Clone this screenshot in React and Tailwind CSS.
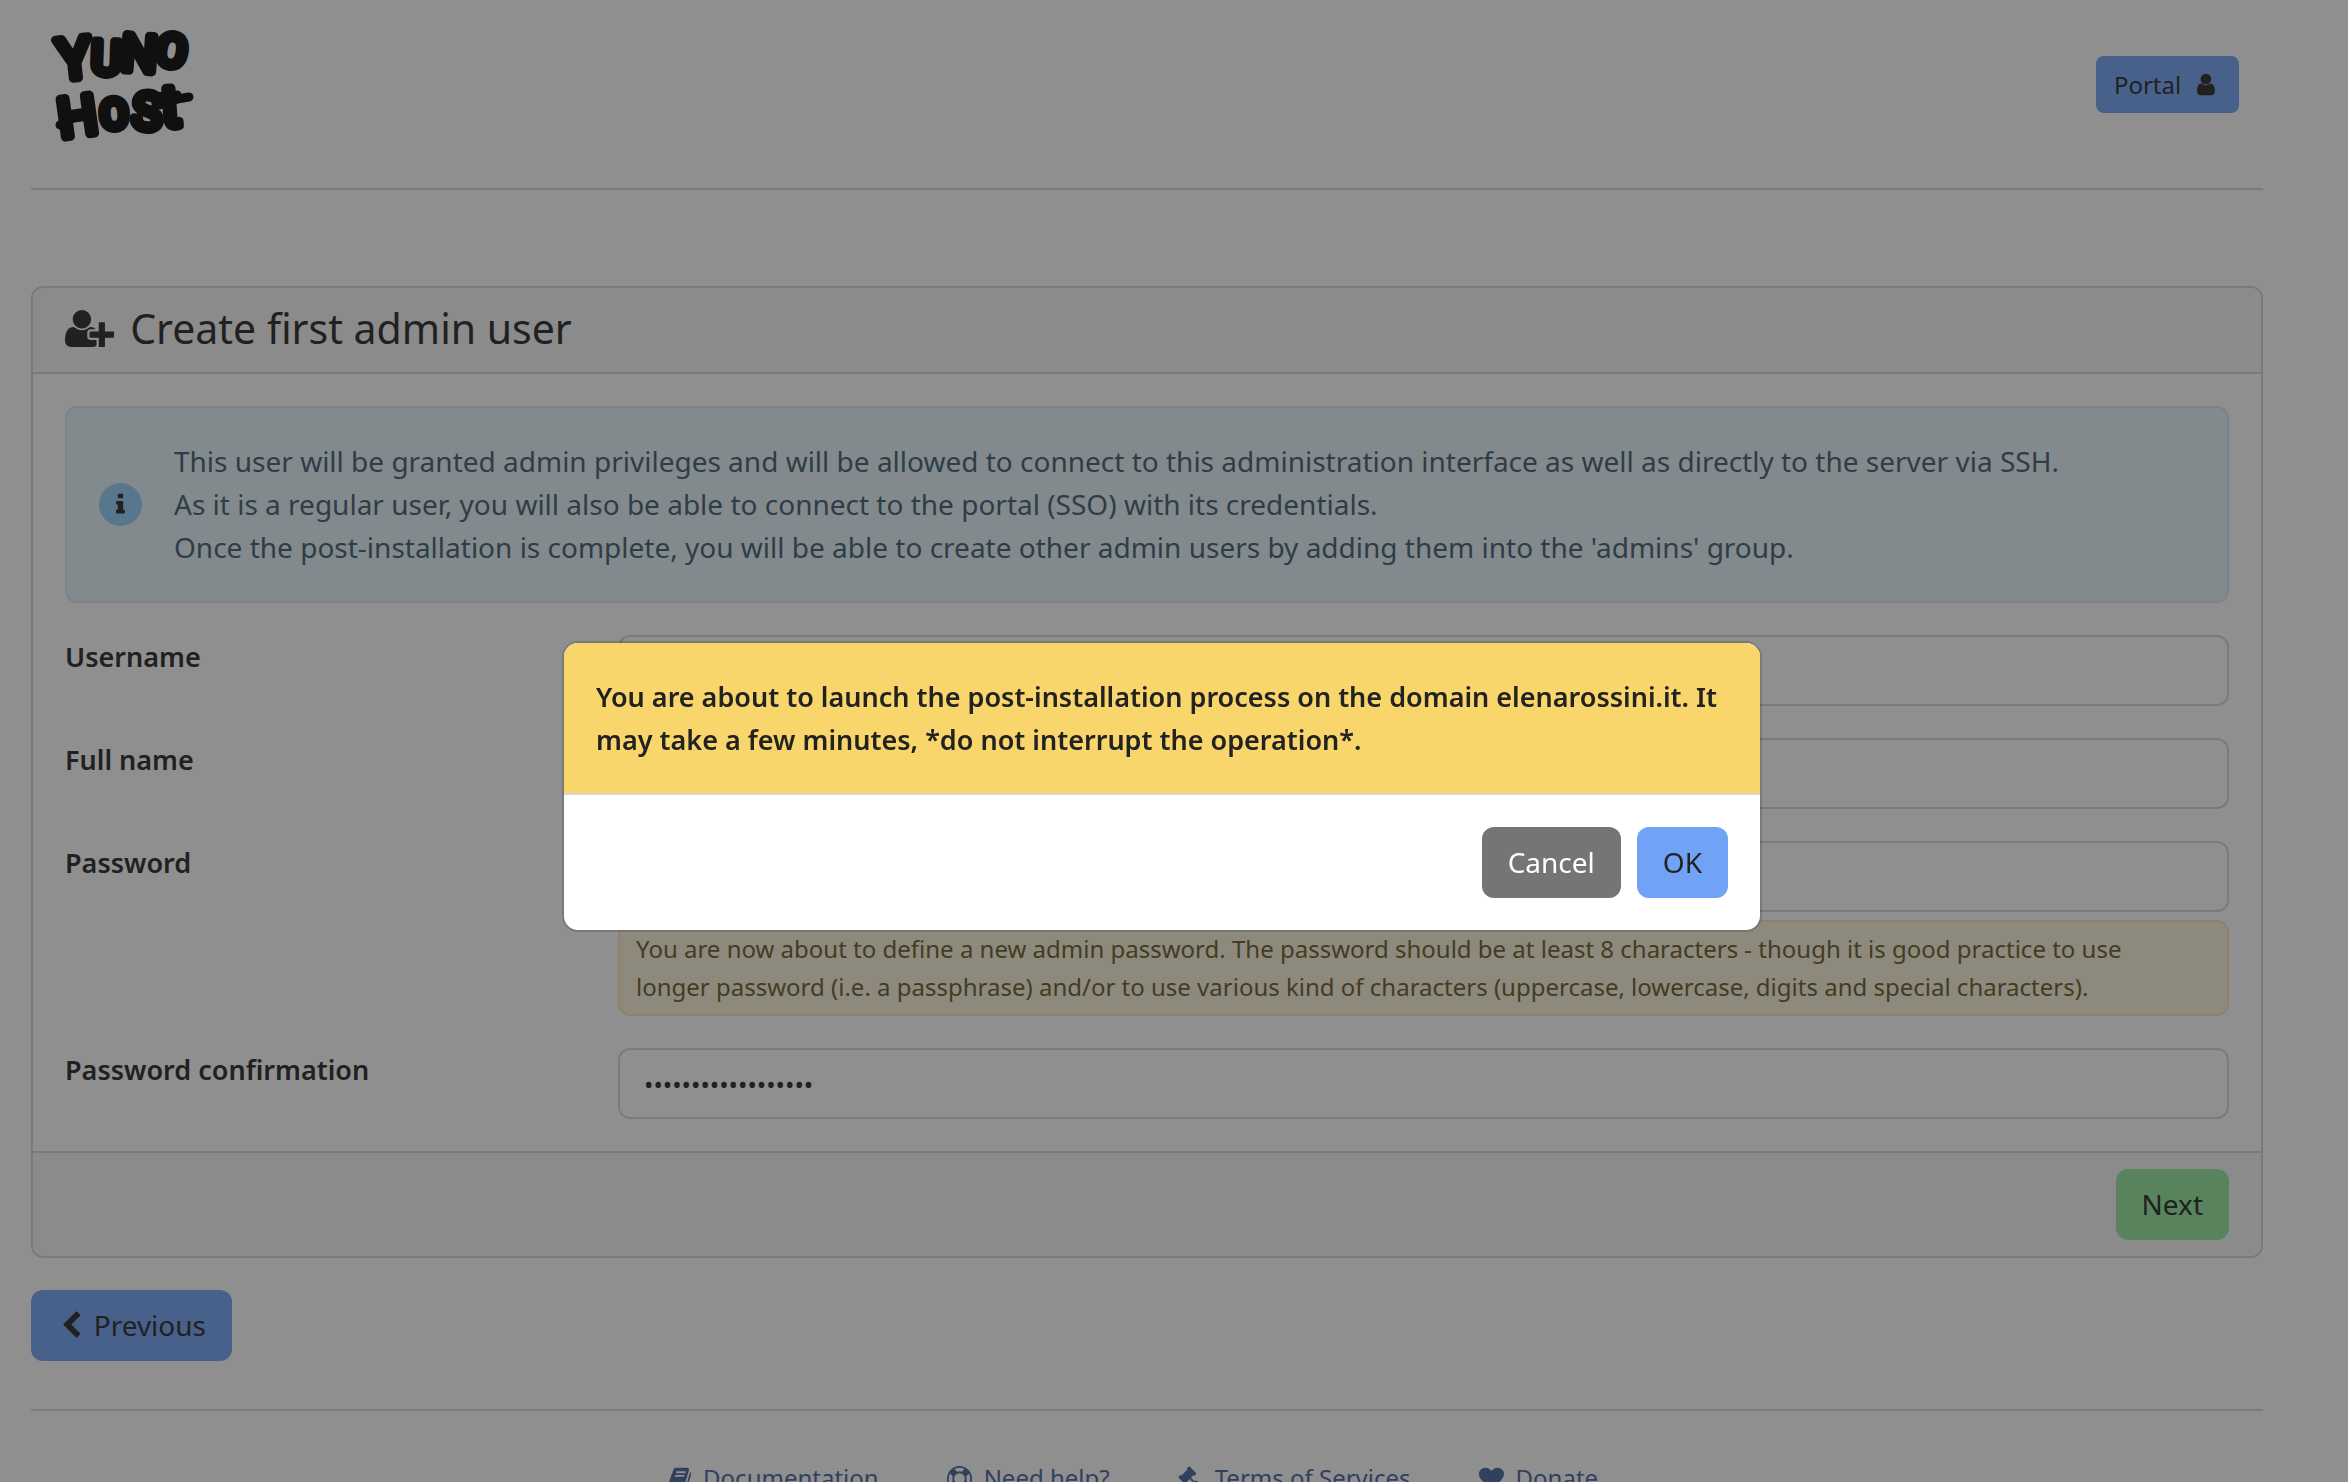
import React, { useState } from 'react';
import clsx from 'clsx';

const ICONS = {
  user: {
    width: 1280,
    d: 'M1280 1399q0 109-62.5 187t-150.5 78h-854q-88 0-150.5-78t-62.5-187q0-85 8.5-160.5t31.5-152 58.5-131 94-89 134.5-34.5q131 128 313 128t313-128q76 0 134.5 34.5t94 89 58.5 131 31.5 152 8.5 160.5zm-256-887q0 159-112.5 271.5t-271.5 112.5-271.5-112.5-112.5-271.5 112.5-271.5 271.5-112.5 271.5 112.5 112.5 271.5z',
  },
  userPlus: {
    width: 2048,
    d: 'M704 896q-159 0-271.5-112.5t-112.5-271.5 112.5-271.5 271.5-112.5 271.5 112.5 112.5 271.5-112.5 271.5-271.5 112.5zm960 128h352q13 0 22.5 9.5t9.5 22.5v192q0 13-9.5 22.5t-22.5 9.5h-352v352q0 13-9.5 22.5t-22.5 9.5h-192q-13 0-22.5-9.5t-9.5-22.5v-352h-352q-13 0-22.5-9.5t-9.5-22.5v-192q0-13 9.5-22.5t22.5-9.5h352v-352q0-13 9.5-22.5t22.5-9.5h192q13 0 22.5 9.5t9.5 22.5v352zm-736 224q0 52 38 90t90 38h256v238q-68 50-171 50h-874q-121 0-194-69t-73-190q0-53 3.5-103.5t14-109 26.5-108.5 43-97.5 62-81 85.5-53.5 111.5-20q19 0 39 17 79 61 154.5 91.5t164.5 30.5 164.5-30.5 154.5-91.5q20-17 39-17 132 0 217 96h-223q-52 0-90 38t-38 90v192z',
  },
  info: {
    width: 640,
    d: 'M640 1344v128q0 26-19 45t-45 19h-512q-26 0-45-19t-19-45v-128q0-26 19-45t45-19h64v-384h-64q-26 0-45-19t-19-45v-128q0-26 19-45t45-19h384q26 0 45 19t19 45v576h64q26 0 45 19t19 45zm-128-1152v192q0 26-19 45t-45 19h-256q-26 0-45-19t-19-45v-192q0-26 19-45t45-19h256q26 0 45 19t19 45z',
  },
  chevronLeft: {
    width: 1280,
    d: 'M1171 301l-531 531 531 531q19 19 19 45t-19 45l-166 166q-19 19-45 19t-45-19l-742-742q-19-19-19-45t19-45l742-742q19-19 45-19t45 19l166 166q19 19 19 45t-19 45z',
  },
  book: {
    width: 1664,
    d: 'M1639 478q40 57 18 129l-275 906q-19 64-76.5 107.5t-122.5 43.5h-923q-77 0-148.5-53.5t-99.5-131.5q-24-67-2-127 0-4 3-27t4-37q1-8-3-21.5t-3-19.5q2-11 8-21t16.5-23.5 16.5-23.5q23-38 45-91.5t30-91.5q3-10 .5-30t-.5-28q3-11 17-28t17-23q21-36 42-92t25-90q1-9-2.5-32t.5-28q4-13 22-30.5t22-22.5q19-26 42.5-84.5t27.5-96.5q1-8-3-25.5t-2-26.5q2-8 9-18t18-23 17-21q8-12 16.5-30.5t15-35 16-36 19.5-32 26.5-23.5 36-11.5 47.5 5.5l-1 3q38-9 51-9h761q74 0 114 56t18 130l-274 906q-36 119-71.5 153.5t-128.5 34.5h-869q-27 0-38 15-11 16-1 43 24 70 144 70h923q29 0 56-15.5t35-41.5l300-987q7-22 5-57 38 15 59 43zm-1064 2q-4 13 2 22.5t20 9.5h608q13 0 25.5-9.5t16.5-22.5l21-64q4-13-2-22.5t-20-9.5h-608q-13 0-25.5 9.5t-16.5 22.5zm-83 256q-4 13 2 22.5t20 9.5h608q13 0 25.5-9.5t16.5-22.5l21-64q4-13-2-22.5t-20-9.5h-608q-13 0-25.5 9.5t-16.5 22.5z',
  },
  lifeRing: {
    width: 1792,
    d: 'M896 0q182 0 348 71t286 191 191 286 71 348-71 348-191 286-286 191-348 71-348-71-286-191-191-286-71-348 71-348 191-286 286-191 348-71zm0 128q-190 0-361 90l194 194q82-28 167-28t167 28l194-194q-171-90-361-90zm-678 1129l194-194q-28-82-28-167t28-167l-194-194q-90 171-90 361t90 361zm678 407q190 0 361-90l-194-194q-82 28-167 28t-167-28l-194 194q171 90 361 90zm0-384q159 0 271.5-112.5t112.5-271.5-112.5-271.5-271.5-112.5-271.5 112.5-112.5 271.5 112.5 271.5 271.5 112.5zm484-217l194 194q90-171 90-361t-90-361l-194 194q28 82 28 167t-28 167z',
  },
  gavel: {
    width: 1792,
    d: 'M1771 1536q0 53-37 90l-107 108q-39 37-91 37-53 0-90-37l-363-364q-38-36-38-90 0-53 43-96l-256-256-126 126q-14 14-34 14t-34-14q2 2 12.5 12t12.5 13 10 11.5 10 13.5 6 13.5 5.5 16.5 1.5 18q0 38-28 68-3 3-16.5 18t-19 20.5-18.5 16.5-22 15.5-22 9-26 4.5q-40 0-68-28l-408-408q-28-28-28-68 0-13 4.5-26t9-22 15.5-22 16.5-18.5 20.5-19 18-16.5q30-28 68-28 10 0 18 1.5t16.5 5.5 13.5 6 13.5 10 11.5 10 13 12.5 12 12.5q-14-14-14-34t14-34l348-348q14-14 34-14t34 14q-2-2-12.5-12t-12.5-13-10-11.5-10-13.5-6-13.5-5.5-16.5-1.5-18q0-38 28-68 3-3 16.5-18t19-20.5 18.5-16.5 22-15.5 22-9 26-4.5q40 0 68 28l408 408q28 28 28 68 0 13-4.5 26t-9 22-15.5 22-16.5 18.5-20.5 19-18 16.5q-30 28-68 28-10 0-18-1.5t-16.5-5.5-13.5-6-13.5-10-11.5-10-13-12.5-12-12.5q14 14 14 34t-14 34l-126 126 256 256q43-43 96-43 52 0 91 37l363 363q37 39 37 91z',
  },
  heart: {
    width: 1792,
    d: 'M896 1664q-26 0-44-18l-624-602q-10-8-27.5-26t-55.5-65.5-68-97.5-53.5-121-23.5-138q0-220 127-344t351-124q62 0 126.5 21.5t120 58 95.5 68.5 76 68q36-36 76-68t95.5-68.5 120-58 126.5-21.5q224 0 351 124t127 344q0 221-229 450l-623 600q-18 18-44 18z',
  },
};

function Icon({ name, className }) {
  const { width, d } = ICONS[name];
  return (
    <svg viewBox={`0 0 ${width} 1792`} className={clsx('w-auto shrink-0 fill-current', className)} aria-hidden="true">
      <path d={d} />
    </svg>
  );
}

// Each letter leans its own way, like the brush lettering of the brand
const LOGO_LETTERS = [
  { char: 'Y', x: 21, y: 54, size: 56, rotate: -6 },
  { char: 'U', x: 51, y: 50, size: 46, rotate: 2 },
  { char: 'N', x: 83, y: 47, size: 50, rotate: 4 },
  { char: 'O', x: 114, y: 42, size: 44, rotate: 10 },
  { char: 'H', x: 25, y: 111, size: 54, rotate: -8 },
  { char: 'O', x: 60, y: 104, size: 40, rotate: -4 },
  { char: 'S', x: 91, y: 105, size: 50, rotate: 4 },
  { char: 't', x: 117, y: 102, size: 58, rotate: -4 },
];

function Logo() {
  return (
    <svg viewBox="0 0 140 121" className="h-[121px] w-[140px] overflow-visible" role="img" aria-label="YunoHost">
      <g
        textAnchor="middle"
        strokeWidth="9"
        strokeLinecap="round"
        strokeLinejoin="round"
        className="fill-black stroke-black font-['Roboto',sans-serif] font-normal"
      >
        {LOGO_LETTERS.map(({ char, x, y, size, rotate }, i) => (
          <text key={i} x={x} y={y} fontSize={size} transform={`rotate(${rotate} ${x} ${y})`}>
            {char}
          </text>
        ))}
        {/* The brush runs on past the word at both ends */}
        <path d="M5 101L18 94M104 78L134 73" />
      </g>
    </svg>
  );
}

function Button({ className, ...props }) {
  return <button type="button" className={clsx('h-[71px] rounded-xl px-[26px]', className)} {...props} />;
}

function Field({ id, label, hint, ...props }) {
  return (
    <div className="flex gap-3">
      <label htmlFor={id} className="w-1/4 shrink-0 text-[27px] font-semibold">
        {label}
      </label>
      <div className="flex flex-1 flex-col gap-2">
        <input
          id={id}
          className="h-[71px] w-full rounded-xl border-2 border-[#d5d5d5] bg-white px-6 text-[25px]"
          aria-describedby={hint ? `${id}-hint` : undefined}
          {...props}
        />
        {hint && (
          <p
            id={`${id}-hint`}
            className="rounded-xl border-2 border-[#f3e7b3] bg-[#fbf3db] py-2 pr-8 pl-4 text-2xl leading-[38px] text-[#655925]"
          >
            {hint}
          </p>
        )}
      </div>
    </div>
  );
}

const FOOTER_LINKS = [
  { icon: 'book', label: 'Documentation' },
  { icon: 'lifeRing', label: 'Need help?' },
  { icon: 'gavel', label: 'Terms of Services' },
  { icon: 'heart', label: 'Donate' },
];

const PASSWORD_HINT =
  'You are now about to define a new admin password. The password should be at least 8 characters - though it is good practice to use longer password (i.e. a passphrase) and/or to use various kind of characters (uppercase, lowercase, digits and special characters).';

export default function App() {
  const [confirmOpen, setConfirmOpen] = useState(true);

  return (
    <div className="h-screen overflow-hidden bg-white pr-[85px] pl-[31px] font-['Noto_Sans',sans-serif] text-[28px] leading-[43px] text-[#222]">
      <header className="flex items-center justify-between border-b-2 border-[#d5d5d5] px-6 pt-6 pb-[43px]">
        <a href="#">
          <Logo />
        </a>
        <a href="#portal" className="flex h-[57px] items-center gap-4 rounded-lg bg-[#70a2f5] pr-6 pl-[18px] text-2xl">
          Portal
          <Icon name="user" className="h-[25px]" />
        </a>
      </header>

      <main className="mt-24">
        <form className="overflow-hidden rounded-xl border-2 border-[#d5d5d5]" onSubmit={(e) => e.preventDefault()}>
          <div className="flex h-[86px] items-center gap-4 border-b-2 border-[#d5d5d5] bg-[#f7f7f7] px-8 pb-1">
            <Icon name="userPlus" className="h-[43px]" />
            <h1 className="text-[41px]">Create first admin user</h1>
          </div>

          <div className="flex flex-col gap-8 p-8">
            <div className="flex items-center gap-8 rounded-xl border-2 border-[#d1e9f3] bg-[#e5f5fb] p-8 text-[#3f5b6d]">
              <span className="flex size-[43px] shrink-0 items-center justify-center rounded-full bg-[#91cff9] text-[#222]">
                <Icon name="info" className="h-[25px]" />
              </span>
              <p>
                This user will be granted admin privileges and will be allowed to connect to this administration
                interface as well as directly to the server via SSH.
                <br />
                As it is a regular user, you will also be able to connect to the portal (SSO) with its credentials.
                <br />
                Once the post-installation is complete, you will be able to create other admin users by adding them
                into the 'admins' group.
              </p>
            </div>

            <Field id="username" label="Username" type="text" />
            <Field id="fullname" label="Full name" type="text" />
            <Field id="password" label="Password" type="password" hint={PASSWORD_HINT} />
            <Field
              id="confirmation"
              label="Password confirmation"
              type="password"
              defaultValue="correcthorsebatter"
            />
          </div>

          <div className="flex justify-end border-t-2 border-[#d5d5d5] bg-[#f7f7f7] px-8 py-4">
            <Button type="submit" className="bg-[#91e799]" onClick={() => setConfirmOpen(true)}>
              Next
            </Button>
          </div>
        </form>

        <Button className="mt-8 flex items-center gap-3 bg-[#70a2f5]">
          <Icon name="chevronLeft" className="ml-1 h-[29px]" />
          Previous
        </Button>
      </main>

      <footer className="mt-12 border-t-2 border-[#d5d5d5] pt-12">
        <nav className="flex justify-center gap-[68px] pr-7 text-2xl leading-[38px] text-[#43619b]">
          {FOOTER_LINKS.map(({ icon, label }) => (
            <a key={label} href="#" className="flex items-center gap-3">
              <Icon name={icon} className="h-[25px]" />
              {label}
            </a>
          ))}
        </nav>
      </footer>

      {confirmOpen && (
        <div className="fixed inset-0 flex items-center justify-center bg-[#1f1f1f]/50 pt-[90px] pr-6">
          <div
            role="dialog"
            aria-modal="true"
            aria-labelledby="confirm-title"
            className="w-full max-w-[1200px] overflow-hidden rounded-2xl border-2 border-black/15 bg-white bg-clip-padding"
          >
            <h2
              id="confirm-title"
              className="border-b-2 border-[#d5d5d5] bg-[#f8d66b] p-8 text-[27px] leading-[43px] font-semibold"
            >
              You are about to launch the post-installation process on the domain elenarossini.it. It may take a few
              minutes, *do not interrupt the operation*.
            </h2>
            <div className="flex justify-end gap-4 p-8">
              <Button className="bg-[#757575] text-white" onClick={() => setConfirmOpen(false)}>
                Cancel
              </Button>
              <Button className="bg-[#70a2f5]" onClick={() => setConfirmOpen(false)}>
                OK
              </Button>
            </div>
          </div>
        </div>
      )}
    </div>
  );
}
